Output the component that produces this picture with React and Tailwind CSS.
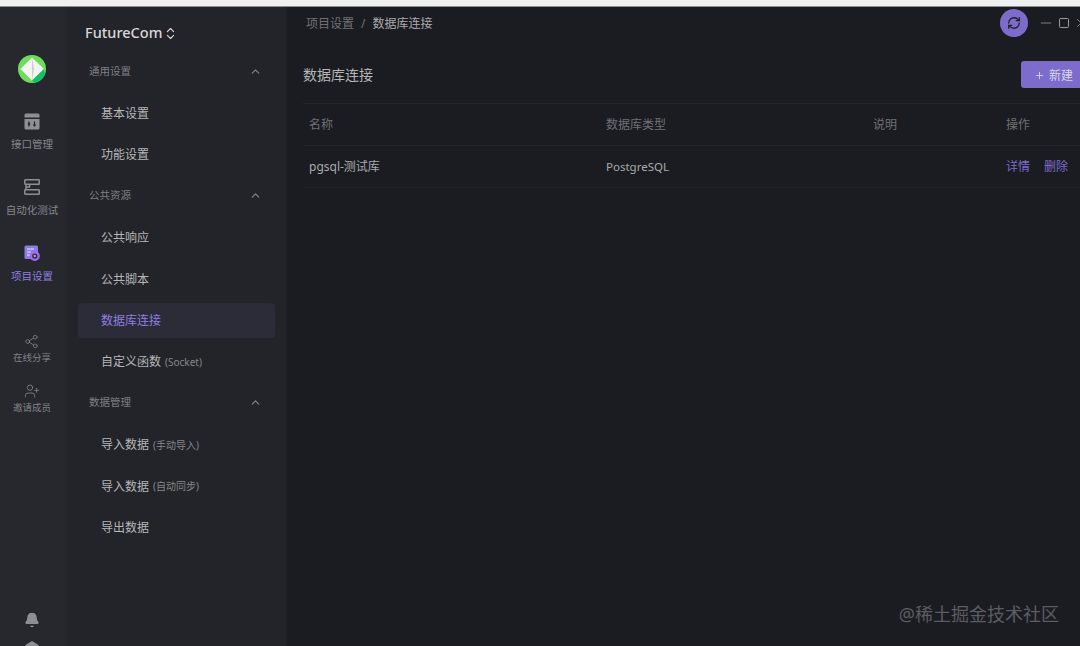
import React from "react";
import { ChevronUp, ChevronsUpDown, Share2, UserPlus, Bell, RefreshCw, Minus, Square, X, Plus } from "lucide-react";

const groups = [
  { title: "通用设置", items: [{ label: "基本设置" }, { label: "功能设置" }] },
  {
    title: "公共资源",
    items: [
      { label: "公共响应" },
      { label: "公共脚本" },
      { label: "数据库连接", active: true },
      { label: "自定义函数", note: "(Socket)" },
    ],
  },
  {
    title: "数据管理",
    items: [
      { label: "导入数据", note: "(手动导入)" },
      { label: "导入数据", note: "(自动同步)" },
      { label: "导出数据" },
    ],
  },
];

function Logo() {
  return (
    <svg width="28" height="28" viewBox="0 0 28 28">
      <circle cx="14" cy="14" r="14" fill="#6fdc5e" />
      <path d="M14 2.5 L26 14 L14 25.5 L2.5 14 Z" fill="#f4f4f2" />
      <path d="M14 2.5 L16 14 L14 25.5 Z" fill="#cfcdca" />
      <path d="M26 14 L14 25.5 L17 27.7 A14 14 0 0 0 27 19 Z" fill="#12c06a" />
    </svg>
  );
}

function ApiIcon() {
  return (
    <svg width="16" height="17" viewBox="0 0 16 17">
      <path d="M2 0.5 H14 A1.5 1.5 0 0 1 15.5 2 V4.5 H0.5 V2 A1.5 1.5 0 0 1 2 0.5 Z" fill="#8e8f93" />
      <path d="M0.5 6 H15.5 V15 A1.5 1.5 0 0 1 14 16.5 H2 A1.5 1.5 0 0 1 0.5 15 Z" fill="#8e8f93" />
      <path d="M5 8.5 V13.5 M10.5 8.5 V13.5" stroke="#26282e" strokeWidth="1.2" />
      <circle cx="5" cy="11" r="1.2" fill="#26282e" />
      <circle cx="10.5" cy="12" r="1.2" fill="#26282e" />
    </svg>
  );
}

function AutoIcon() {
  return (
    <svg width="16" height="16" viewBox="0 0 16 16" fill="none" stroke="#8e8f93" strokeWidth="1.5">
      <rect x="0.8" y="0.8" width="14.4" height="4.4" rx="0.5" />
      <path d="M2 5.5 V10.5 M5.5 5.5 V8 H2" />
      <rect x="0.8" y="10.8" width="14.4" height="4.4" rx="0.5" />
    </svg>
  );
}

function ProjectIcon() {
  return (
    <svg width="16" height="16" viewBox="0 0 16 16">
      <rect x="0.5" y="0.5" width="13.5" height="13.5" rx="1.5" fill="#8b7ce0" />
      <path d="M3 4 H10 M3 7 H7 M3 10 H6" stroke="#e8e6f7" strokeWidth="1.2" />
      <circle cx="10.8" cy="11" r="5" fill="#a06cf0" />
      <circle cx="10.8" cy="11" r="2.6" fill="#26282e" />
      <circle cx="10.8" cy="11" r="1.2" fill="#b79af5" />
    </svg>
  );
}

function GearIcon() {
  return (
    <svg width="16" height="16" viewBox="0 0 16 16">
      <path d="M8 0 L14.5 4 V12 L8 16 L1.5 12 V4 Z" fill="#8e8f93" />
      <circle cx="8" cy="8" r="2.4" fill="#26282e" />
    </svg>
  );
}

function RailItem({ icon, label, active, className }) {
  return (
    <div className={`flex flex-col items-center ${className}`}>
      <div className="h-4 flex items-center justify-center">{icon}</div>
      <span className={`mt-[7.5px] text-[10.5px] leading-[14px] whitespace-nowrap ${active ? "text-[#8f7fe0]" : "text-[#85868a]"}`}>
        {label}
      </span>
    </div>
  );
}

function SmallRailItem({ icon, label, className }) {
  return (
    <div className={`flex flex-col items-center ${className}`}>
      <div className="h-4 flex items-center justify-center">{icon}</div>
      <span className="mt-[1.5px] text-[9.5px] leading-[14px] whitespace-nowrap text-[#808185]">{label}</span>
    </div>
  );
}

function Rail() {
  return (
    <aside className="w-[67px] shrink-0 pr-[3px] bg-[#26282e] flex flex-col items-center overflow-hidden">
      <div className="mt-[48px]">
        <Logo />
      </div>
      <RailItem className="mt-[30px]" icon={<ApiIcon />} label="接口管理" />
      <RailItem className="mt-[28.5px]" icon={<AutoIcon />} label="自动化测试" />
      <RailItem className="mt-[28.5px]" icon={<ProjectIcon />} label="项目设置" active />
      <SmallRailItem className="mt-[51px]" icon={<Share2 size={15} strokeWidth={1.2} color="#85868a" />} label="在线分享" />
      <SmallRailItem className="mt-[18px]" icon={<UserPlus size={16} strokeWidth={1.2} color="#85868a" />} label="邀请成员" />
      <div className="mt-[197px] h-4 flex items-center justify-center">
        <Bell size={16} fill="#8e8f93" color="#8e8f93" />
      </div>
      <div className="mt-[13px]">
        <GearIcon />
      </div>
    </aside>
  );
}

function Sidebar() {
  return (
    <aside className="w-[219px] shrink-0 bg-[#232429] overflow-hidden">
      <div className="h-[44px] pt-[8px] pl-[18px] flex items-center gap-[1px] text-[#d8d8da]">
        <span className="text-[14.5px] font-medium">FutureCom</span>
        <ChevronsUpDown size={15} strokeWidth={1.8} />
      </div>
      {groups.map((group) => (
        <div key={group.title}>
          <div className="h-[41.4px] pl-[22px] pr-[24px] flex items-center justify-between text-[#7e7f83]">
            <span className="text-[10.5px]">{group.title}</span>
            <ChevronUp size={13} strokeWidth={2} color="#85868a" />
          </div>
          {group.items.map((item, i) => (
            <div key={i} className="h-[41.4px] flex items-center">
              <div
                className={`ml-[11px] w-[197px] h-[35px] pt-[2px] pl-[23px] rounded flex items-center ${
                  item.active ? "bg-[#2c2b38] text-[#8f7fe0]" : "text-[#b5b6b8]"
                }`}
              >
                <span className="text-[12px]">{item.label}</span>
                {item.note && <span className="ml-[4px] text-[10px] text-[#85868a]">{item.note}</span>}
              </div>
            </div>
          ))}
        </div>
      ))}
    </aside>
  );
}

function Main() {
  const cols = "grid grid-cols-[297px_267px_133px_1fr] pl-[6px] items-center";
  return (
    <main className="relative flex-1 min-w-0 bg-[#1b1c21] border-l border-[#1f2025]">
      <div className="h-[34px] pl-[19px] flex items-center text-[12px]">
        <span className="text-[#707175]">项目设置</span>
        <span className="mx-[7px] text-[#707175]">/</span>
        <span className="text-[#a9aaad]">数据库连接</span>
        <div className="absolute top-[2px] right-0 mr-[-7.5px] flex items-center">
          <div className="w-7 h-7 rounded-full bg-[#7d6ccb] flex items-center justify-center mr-[10px]">
            <RefreshCw size={14} color="#1f2026" strokeWidth={2.2} />
          </div>
          <Minus size={16} strokeWidth={1.4} color="#85868a" className="mr-[4px]" />
          <Square size={12} color="#9a9b9e" strokeWidth={2} className="mr-[3.5px]" />
          <X size={14} strokeWidth={1.6} color="#85868a" />
        </div>
      </div>

      <div className="pl-[16px] mr-[-30px]">
        <div className="h-[62px] flex items-start justify-between">
          <h1 className="mt-[23px] text-[14px] leading-[22px] font-normal text-[#b5b6b8]">数据库连接</h1>
          <button className="mt-[20px] mr-[-1px] w-[90px] h-[27px] pt-[2px] pl-[13px] rounded-[3px] bg-[#7d6ccb] flex items-center gap-[4px] text-[12px] text-[#d8d6e8]">
            <Plus size={11} />
            新建
          </button>
        </div>
        <div className={`${cols} h-[43px] border-y border-[#24252a] text-[12px] text-[#6f7074]`}>
          <span>名称</span>
          <span>数据库类型</span>
          <span>说明</span>
          <span>操作</span>
        </div>
        <div className={`${cols} h-[42px] pt-[1px] border-b border-[#24252a] text-[12px] text-[#a9aaad]`}>
          <span>pgsql-测试库</span>
          <span className="text-[11.5px]">PostgreSQL</span>
          <span />
          <span className="flex gap-[14px] text-[#7d6ccb]">
            <span>详情</span>
            <span>删除</span>
          </span>
        </div>
      </div>

      <div className="absolute right-[21px] bottom-[19px] text-[18px] leading-[26px] text-[#5c5d62]">@稀土掘金技术社区</div>
    </main>
  );
}

export default function App() {
  return (
    <div
      className="w-[1080px] h-[646px] overflow-hidden flex flex-col bg-[#1b1c21]"
      style={{ fontFamily: '"Noto Sans", "Noto Sans CJK SC", sans-serif' }}
    >
      <div className="h-[7px] shrink-0 bg-[#f0f0f0] border-b border-[#8f8f8f]" />
      <div className="flex flex-1 min-h-0">
        <Rail />
        <Sidebar />
        <Main />
      </div>
    </div>
  );
}
